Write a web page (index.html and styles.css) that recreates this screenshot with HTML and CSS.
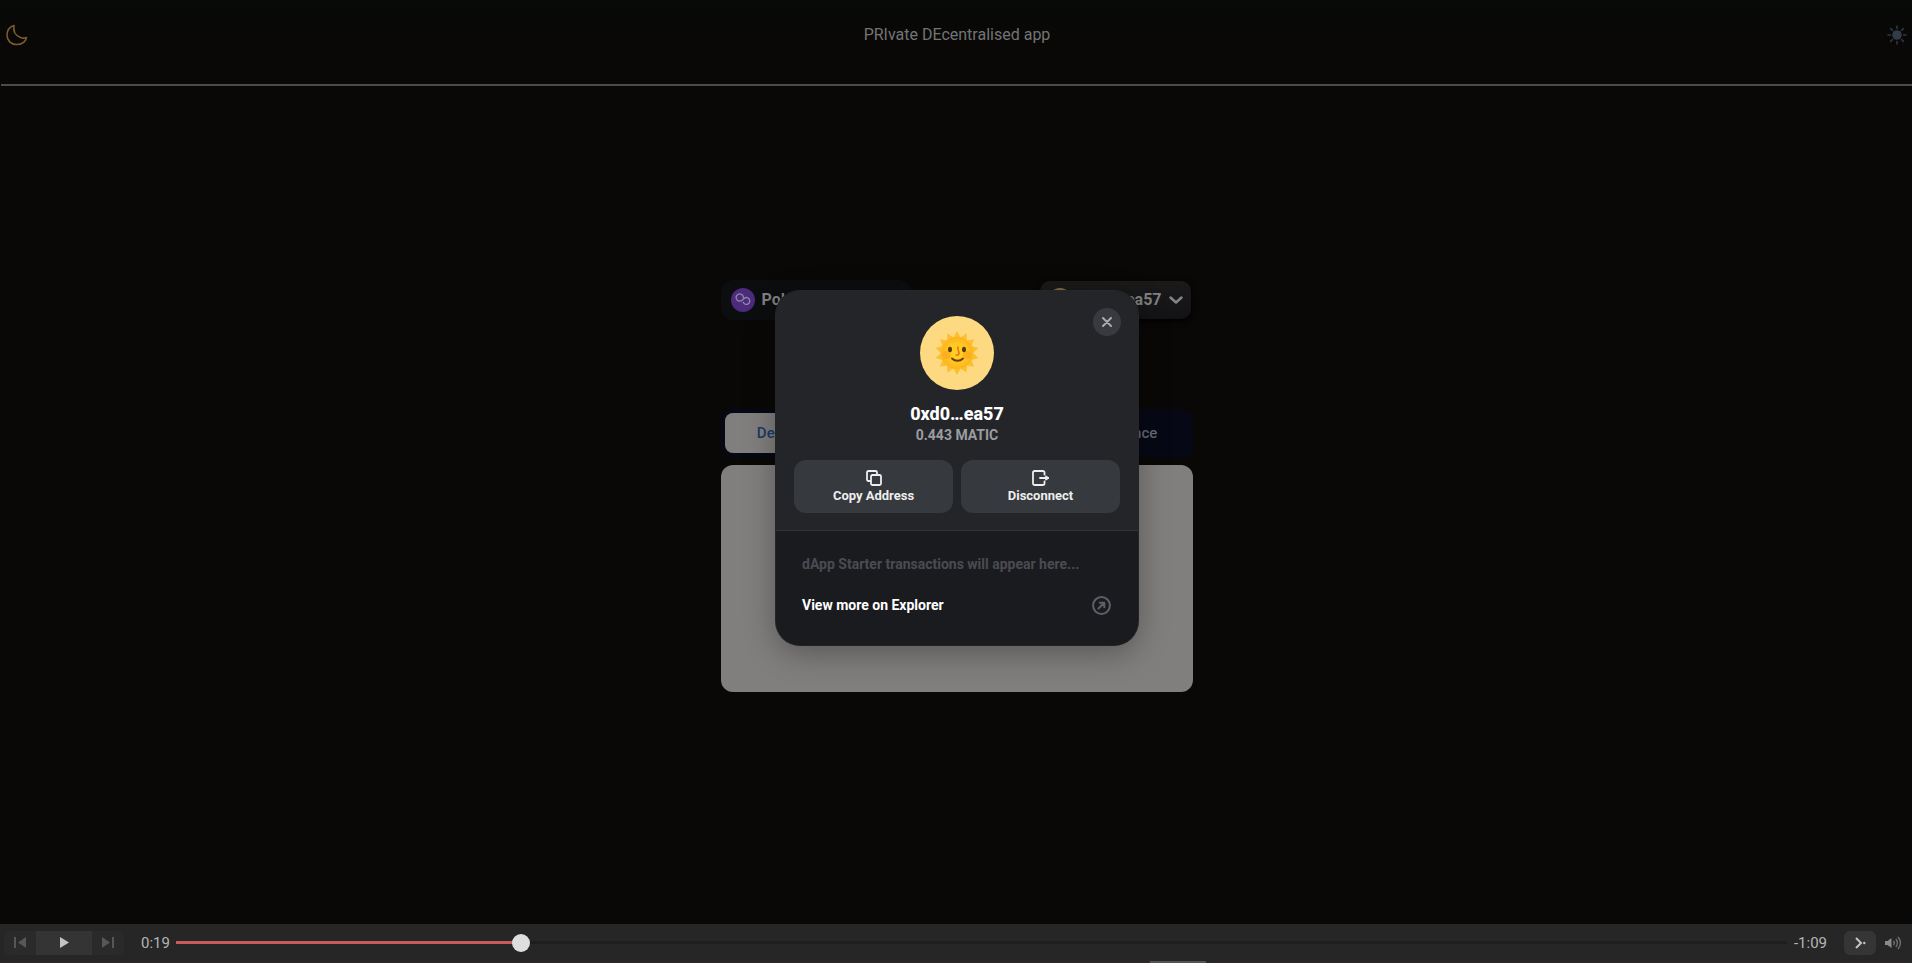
FILE: index.html
```html
<!DOCTYPE html>
<html lang="en">
<head>
<meta charset="utf-8">
<title>PRIvate DEcentralised app</title>
<link rel="stylesheet" href="styles.css">
</head>
<body>
<svg class="defs" aria-hidden="true">
  <defs>
    <radialGradient id="face"><stop offset="0" stop-color="#ffd426"/><stop offset="0.6" stop-color="#ffc71f"/><stop offset="1" stop-color="#fcb322"/></radialGradient>
    <symbol id="sun" viewBox="0 0 46 46">
      <path fill="#fdc02c" d="M23 1l3.600 6.400 5.900-4.200.5 7.300 7.200-1.200-2.800 6.800 7 2L39 23l5.400 4.900-7 2 2.800 6.800-7.200-1.200-.5 7.300-5.900-4.200L23 45l-3.600-6.400-5.900 4.200-.5-7.300-7.200 1.200 2.800-6.800-7-2L7 23l-5.400-4.900 7-2-2.800-6.800 7.200 1.200.5-7.300 5.900 4.200z"/>
      <circle cx="23" cy="23" r="16" fill="url(#face)"/>
      <circle cx="13" cy="25" r="4" fill="#fb9c1e" opacity=".5"/>
      <circle cx="33" cy="25" r="4" fill="#fb9c1e" opacity=".5"/>
      <ellipse cx="16" cy="19.500" rx="2" ry="2.800" fill="#5b3a16"/>
      <ellipse cx="30" cy="19.500" rx="2" ry="2.800" fill="#5b3a16"/>
      <path d="M24 17c-1 4 3 6 0 8h-2" fill="none" stroke="#f2711c" stroke-width="1.600" stroke-linecap="round"/>
      <path d="M18 28.500c3 3 8 3 11 0" fill="none" stroke="#6b3b12" stroke-width="1.800" stroke-linecap="round"/>
    </symbol>
  </defs>
</svg>
<div class="page">
  <div class="stage">
    <header class="header">
      <button class="icon-button" aria-label="Dark theme">
        <svg width="22" height="22" viewBox="0 0 22 22" fill="none" stroke="#7b592c" stroke-width="1.600" stroke-linejoin="round"><path d="M8 1.500C3.500 3 1 6.500 1 11c0 5.500 4 9.500 9.500 9.500 5 0 9-2.500 10-7-2 .8-4 .9-6 0C9.500 11.500 7 7 8 1.500z"/></svg>
      </button>
      <h1 class="title">PRIvate DEcentralised app</h1>
      <button class="icon-button" aria-label="Light theme">
        <svg width="20" height="20" viewBox="0 0 20 20"><circle cx="10" cy="10" r="4.800" fill="#323b48"/><path d="M10 1v2.500M10 16.500V19M1 10h2.500M16.500 10H19M3.600 3.600l1.800 1.800M14.600 14.600l1.800 1.800M3.600 16.400l1.800-1.800M14.600 5.400l1.800-1.800" stroke="#303641" stroke-width="1.600" stroke-linecap="round"/></svg>
      </button>
    </header>
    <main class="main">
      <div class="account-row">
        <button class="chain">
          <svg width="24" height="24" viewBox="0 0 24 24"><circle cx="12" cy="12" r="12" fill="#4c2a7c"/><g fill="none" stroke="#9384a8" stroke-width="1.400" stroke-linecap="round" stroke-linejoin="round"><path d="M12.300 9.200A3.600 3.600 0 1 0 11 12.300l2.500-2.200a3.400 3.400 0 1 1-1.300 4.200"/></g></svg>
          <span>Polygon</span>
        </button>
        <button class="wallet">
          <span class="avatar avatar-small"><svg width="15" height="15"><use href="#sun"/></svg></span>
          <span>0xd0…ea57</span>
          <svg width="14" height="8" viewBox="0 0 14 8" fill="none" stroke="#858585" stroke-width="2.400" stroke-linecap="round" stroke-linejoin="round"><path d="M1.500 1.500L7 6.500l5.500-5"/></svg>
        </button>
      </div>
      <nav class="tabs">
        <button class="tab tab-active">Deposit</button>
        <button class="tab tab-last">Balance</button>
      </nav>
      <section class="card"></section>
    </main>
    <div class="overlay">
      <section class="dialog" role="dialog" aria-labelledby="account">
        <div class="profile">
          <button class="close" aria-label="Close"><svg width="10" height="10" viewBox="0 0 10 10" stroke="#a7aab1" stroke-width="2" stroke-linecap="round"><path d="M1 1l8 8M9 1L1 9"/></svg></button>
          <span class="avatar"><svg width="46" height="46"><use href="#sun"/></svg></span>
          <h2 class="address" id="account">0xd0…ea57</h2>
          <p class="balance">0.443 MATIC</p>
          <div class="actions">
            <button class="action">
              <svg width="16" height="16" viewBox="0 0 16 16" fill="none" stroke="#eee" stroke-width="1.800" stroke-linejoin="round"><rect x="5" y="5" width="10" height="10" rx="1.500"/><path d="M5 11H2.500A1.500 1.500 0 0 1 1 9.500v-7A1.500 1.500 0 0 1 2.500 1h7A1.500 1.500 0 0 1 11 2.500V5"/></svg>
              Copy Address
            </button>
            <button class="action">
              <svg width="18" height="16" viewBox="0 0 18 16" fill="none" stroke="#eee" stroke-width="1.800" stroke-linecap="round" stroke-linejoin="round"><path d="M12.500 4.500v-2A1.500 1.500 0 0 0 11 1H2.500A1.500 1.500 0 0 0 1 2.500v11A1.500 1.500 0 0 0 2.500 15H11a1.500 1.500 0 0 0 1.500-1.500v-2M8 8h8"/><path d="M14 6l3 2-3 2z" fill="#eee" stroke-width="1"/></svg>
              Disconnect
            </button>
          </div>
        </div>
        <div class="activity">
          <p class="empty">dApp Starter transactions will appear here...</p>
          <a class="explorer" href="#">View more on Explorer
            <svg width="19" height="19" viewBox="0 0 19 19" fill="none" stroke="#5e6067" stroke-width="2" stroke-linecap="round" stroke-linejoin="round"><circle cx="9.500" cy="9.500" r="8.400"/><path d="M6.500 12.500l5.500-5.500M7.800 6.700h4.500v4.500"/></svg>
          </a>
        </div>
      </section>
    </div>
  </div>
  <footer class="player">
    <div class="transport">
      <button class="skip" aria-label="Previous"><svg width="12" height="11" viewBox="0 0 12 11" fill="#575757"><path d="M0 0h2v11H0zM12 0v11L4 5.500z"/></svg></button>
      <button class="play" aria-label="Play"><svg width="9" height="11" viewBox="0 0 9 11" fill="#c4c4c4"><path d="M0 0l9 5.500L0 11z"/></svg></button>
      <button class="skip" aria-label="Next"><svg width="12" height="11" viewBox="0 0 12 11" fill="#575757"><path d="M10 0h2v11h-2zM0 0v11l8-5.500z"/></svg></button>
    </div>
    <span class="time">0:19</span>
    <input class="seek" type="range" min="0" max="88" step="any" value="18.55" aria-label="Seek">
    <span class="time">-1:09</span>
    <button class="speed" aria-label="Speed"><svg width="11" height="12" viewBox="0 0 11 12" fill="none" stroke="#c4c4c4" stroke-width="2"><path d="M1 1l5 5-5 5"/><circle cx="9.300" cy="6" r="1.200" fill="#c4c4c4" stroke="none"/></svg></button>
    <button class="volume" aria-label="Volume"><svg width="17" height="14" viewBox="0 0 17 14" fill="none" stroke="#747474" stroke-width="1.300"><path d="M0 5h2.500L6.500 2v10L2.500 9H0z" fill="#8a8a8a" stroke="none"/><path d="M8.500 5c1 1.200 1 2.800 0 4M10.800 3c2 2.500 2 5.500 0 8M13 1c3.200 3.500 3.200 8.500 0 12"/></svg></button>
    <span class="handle"></span>
  </footer>
</div>
</body>
</html>
```
FILE: styles.css
```css
* { box-sizing: border-box; }
body { margin: 0; background: #090806; color: #747474; font: 16px/20px Roboto, sans-serif; }
button { border: 0; padding: 0; background: none; color: inherit; font: inherit; display: flex; align-items: center; justify-content: center; }
h1, h2, p { margin: 0; }
svg { display: block; flex: none; }
.defs { position: absolute; width: 0; height: 0; }
.page { min-height: 100vh; display: flex; flex-direction: column; }
.stage { position: relative; flex: 1; padding-left: 1px; background: linear-gradient(#070a07, #090806 40px); }
.header { display: flex; justify-content: space-between; align-items: flex-start; padding: 25px 4px 39px 5px; border-bottom: 2px solid #4b4b4b; }
.icon-button { height: 20px; width: 22px; }
.title { font-size: 16px; font-weight: 400; }
.main { width: 472px; max-width: 100%; margin: 0 auto; padding-top: 194px; }
.account-row { display: flex; justify-content: space-between; align-items: center; padding-right: 2px; }
.chain { width: 190px; height: 40px; padding: 0 10px; gap: 7px; justify-content: flex-start; border-radius: 12px; background: #0c0d0e; color: #808080; font-weight: 700; }
.wallet { height: 38px; padding: 0 8px; gap: 7px; border-radius: 10px; background: linear-gradient(#1a1a1b, #131316); box-shadow: 0 2px 6px #000; color: #808080; font-weight: 700; }
.tabs { display: grid; grid-template-columns: repeat(4, 1fr); margin-top: 89px; padding: 4px; border-radius: 12px; background: #060815; }
.tab { height: 40px; border-radius: 8px; color: #646872; font-size: 15px; font-weight: 500; }
.tab-active { background: #807f7e; color: #213867; }
.tab-last { grid-column: 4; }
.card { height: 227px; margin-top: 8px; border-radius: 12px; background: #807f7d; }
.overlay { position: absolute; inset: 0; display: flex; align-items: center; justify-content: center; padding: 12px 0 0 2px; }
.dialog { width: 362px; border-radius: 24px; overflow: hidden; background: #1a1b1f; box-shadow: 0 8px 32px rgba(0, 0, 0, .32), 0 0 0 1px #2b2c2f; font-weight: 700; }
.profile { position: relative; display: flex; flex-direction: column; align-items: center; padding: 25px 18px 17px; background: #242529; border-bottom: 1px solid #303135; }
.close { position: absolute; top: 17px; right: 17px; width: 28px; height: 28px; border-radius: 50%; background: #383a3f; }
.avatar { display: grid; place-items: center; width: 74px; height: 74px; border-radius: 50%; background: #fdd981; }
.avatar-small { width: 24px; height: 24px; background: #7f6d40; }
.address { margin-top: 12px; color: #fff; font-size: 18px; line-height: 24px; font-weight: 800; }
.balance { color: #9b9ca1; font-size: 14px; line-height: 18px; }
.actions { align-self: stretch; display: grid; grid-template-columns: 1fr 1fr; gap: 8px; margin-top: 16px; }
.action { flex-direction: column; gap: 2px; height: 53px; border-radius: 12px; background: #36393d; color: #eee; font-size: 13px; line-height: 16px; font-weight: 700; }
.activity { padding: 23px 27px 30px 26px; font-size: 14px; line-height: 20px; }
.empty { color: #4a4b52; }
.explorer { display: flex; justify-content: space-between; align-items: center; margin-top: 21px; color: #fff; text-decoration: none; }
.player { position: relative; display: flex; align-items: center; height: 39px; padding: 0 10px 1px 4px; background: #262626; border-bottom: 1px solid #35232a; }
.transport { display: flex; border-radius: 6px; background: #2a2a2a; overflow: hidden; }
.skip { width: 32px; height: 24px; }
.play { width: 56px; height: 24px; background: #343434; }
.time { margin-left: 17px; color: #b5b5b5; font-size: 15px; }
.seek { flex: 1; min-width: 0; height: 18px; margin: 0 -10px 0 6px; appearance: none; background: linear-gradient(#c75b5b, #c75b5b) 0 50% / 21% 3px no-repeat, linear-gradient(#1e1e1e, #1e1e1e) 0 50% / 100% 3px no-repeat; }
.seek::-webkit-slider-thumb { appearance: none; width: 18px; height: 18px; border-radius: 50%; background: #dedede; }
.speed { width: 32px; height: 24px; margin-left: 17px; border-radius: 6px; background: #353535; }
.volume { margin-left: 9px; }
.handle { position: absolute; bottom: -1px; left: 60.15%; width: 56px; height: 2px; background: #575354; }
```
